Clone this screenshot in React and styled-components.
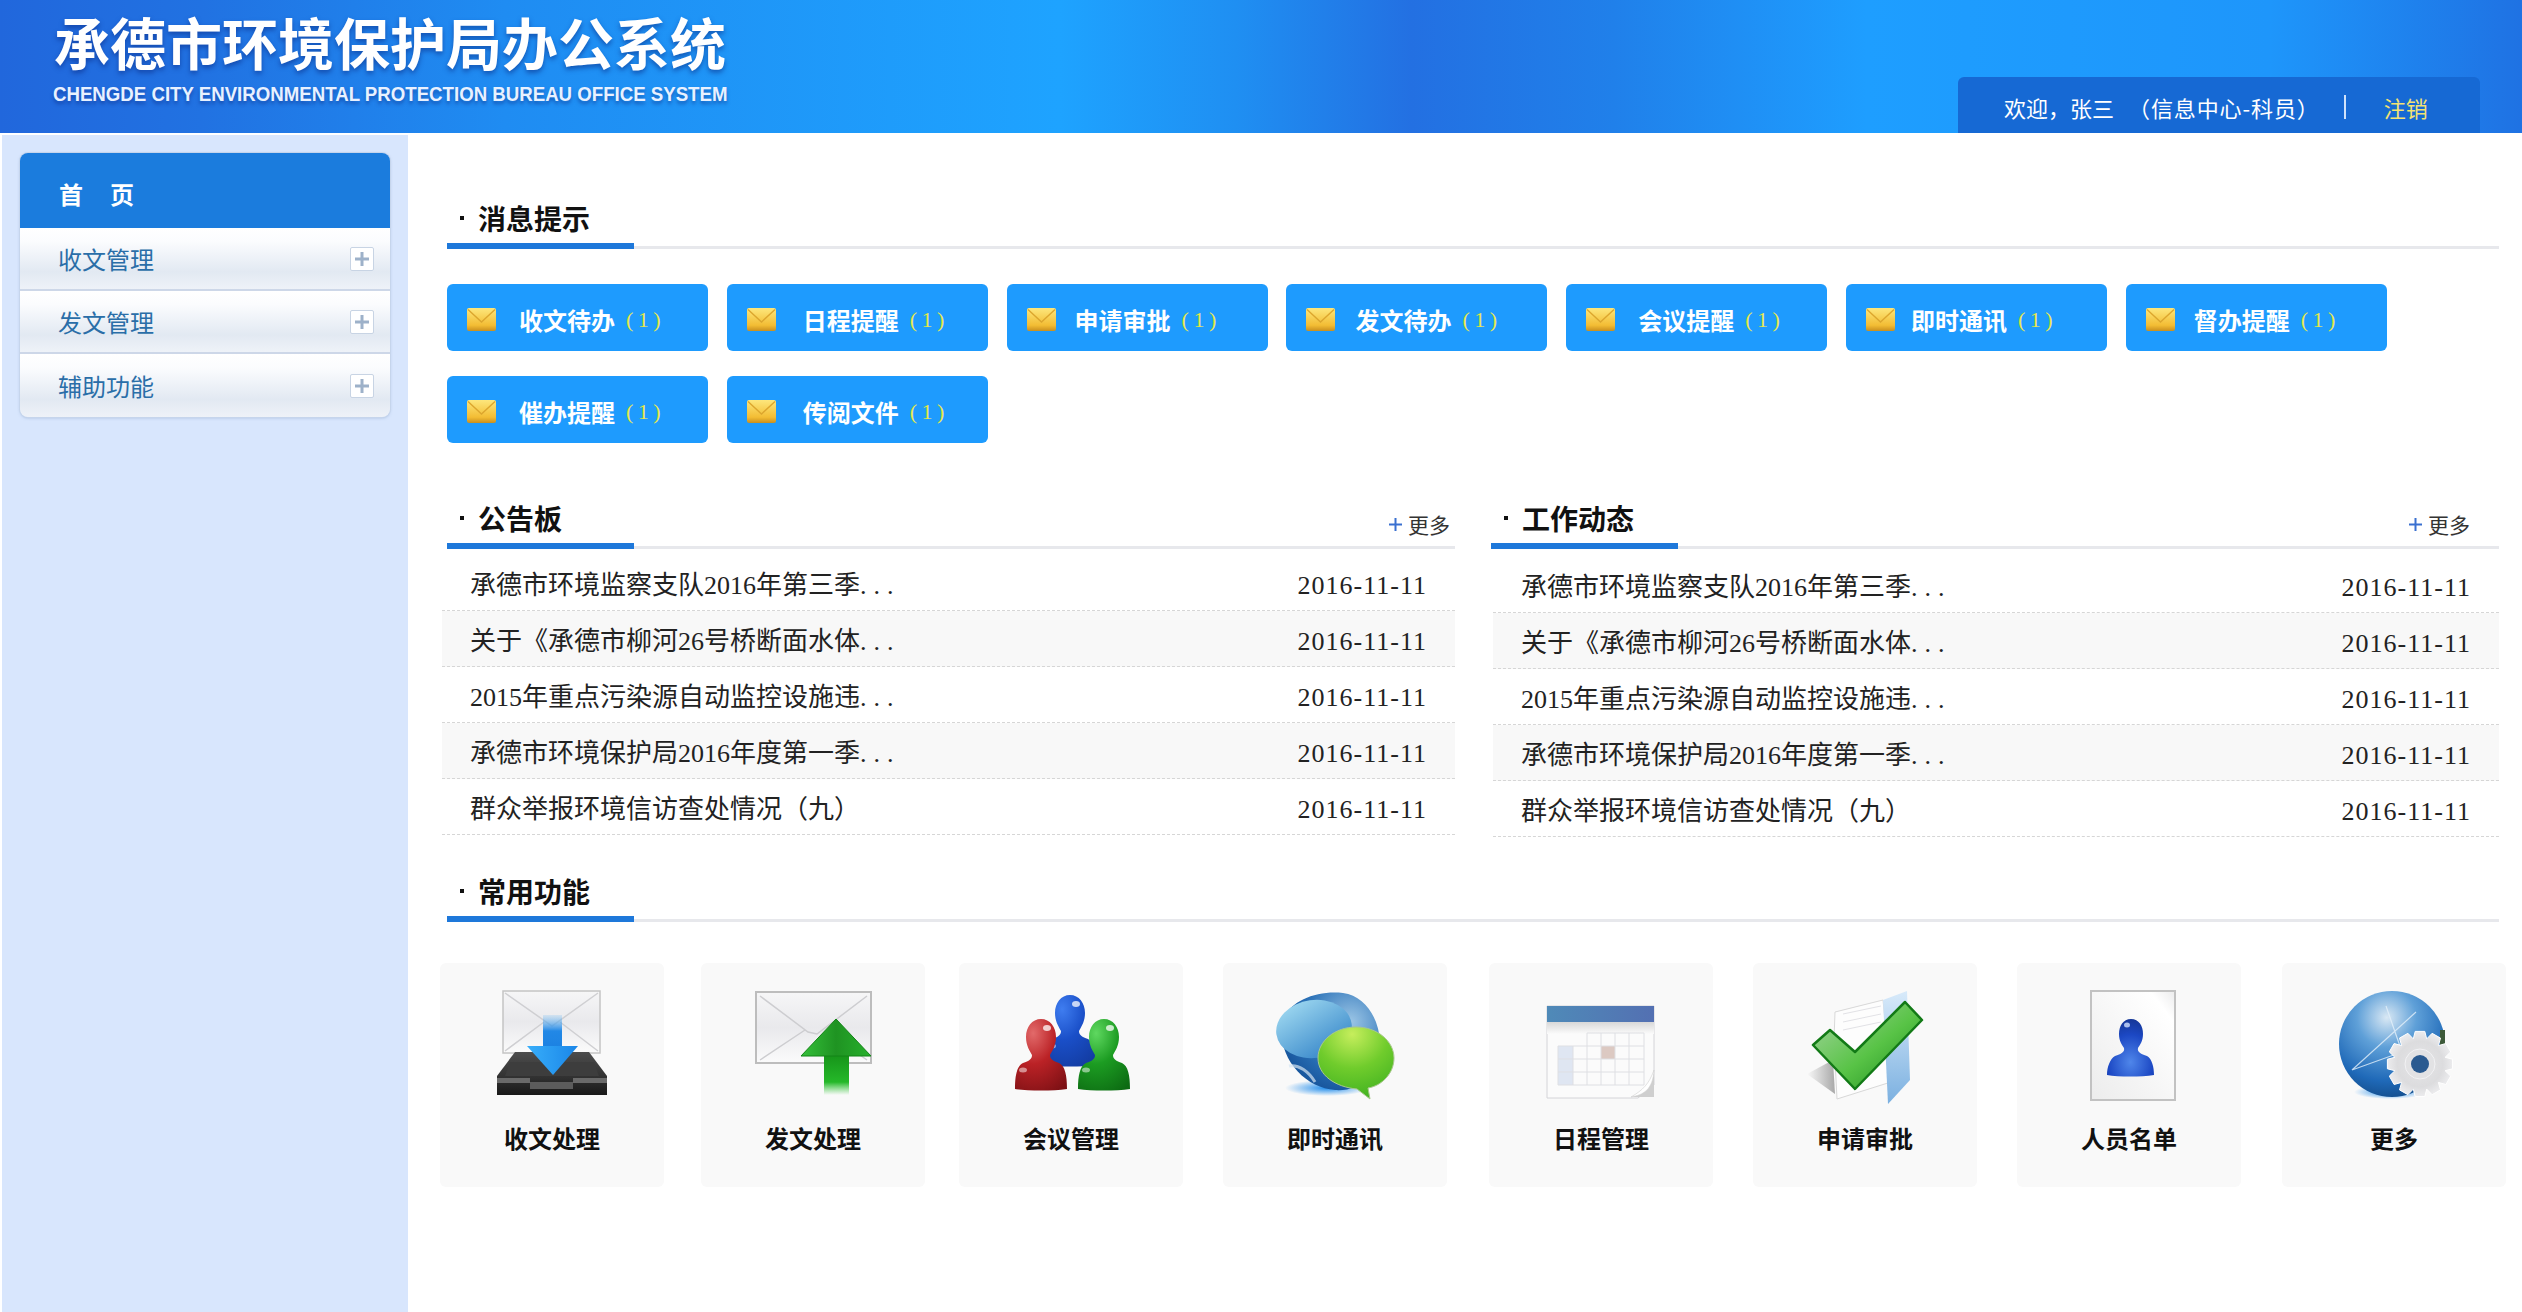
import React from 'react';
import styled, {createGlobalStyle} from 'styled-components';

const SANS = `"Liberation Sans", "Noto Sans CJK SC", sans-serif`;
const SERIF = `"Liberation Serif", "Noto Sans CJK SC", serif`;

const GlobalStyle = createGlobalStyle`
  html, body {
    margin: 0;
    padding: 0;
    background: #fff;
    font-family: ${SANS};
  }
`;

const Page = styled.div`
  width: 2522px;
  min-height: 1312px;
  display: flex;
  flex-direction: column;
  overflow: hidden;
`;

const Header = styled.header`
  height: 133px;
  flex: none;
  display: flex;
  justify-content: space-between;
  align-items: flex-end;
  padding: 0 42px 0 53px;
  box-sizing: border-box;
  background: linear-gradient(
    90deg,
    #2167dc 0%,
    #2172e2 8%,
    #1f8cf2 20%,
    #1ea3ff 42%,
    #1f8ff2 49%,
    #2370e2 56%,
    #2080ea 64%,
    #1e9eff 74%,
    #1e96fb 90%,
    #1f72e3 100%
  );
`;

const Brand = styled.div`
  align-self: flex-start;
  padding-top: 10px;
  color: #fff;
`;

const BrandTitle = styled.div`
  font: 700 56px/62px "Noto Sans CJK SC", sans-serif;
  white-space: nowrap;
  padding-left: 1px;
  text-shadow: 0 3px 5px rgba(10, 40, 130, 0.55);
`;

const BrandSub = styled.div`
  width: 674px;
  margin-top: 10px;
  font: 700 21px/24px ${SANS};
  white-space: nowrap;
  color: #e8f1ff;
  text-shadow: 0 3px 4px rgba(10, 40, 130, 0.5);
  transform: scaleX(0.888);
  transform-origin: left center;
`;

const UserBox = styled.div`
  width: 522px;
  height: 56px;
  box-sizing: border-box;
  padding: 4px 0 0 46px;
  display: flex;
  align-items: center;
  border-radius: 6px 6px 0 0;
  background: #1669d4;
  color: #fff;
  font: 400 22px/28px "Noto Sans CJK SC", sans-serif;
  white-space: nowrap;
`;

const UserDept = styled.span`
  margin-left: 14px;
  letter-spacing: 0.9px;
`;

const Divider = styled.span`
  width: 2px;
  height: 24px;
  margin: 0 38px 0 24px;
  background: #cfe2fb;
`;

const Logout = styled.span`
  color: #f3e272;
`;

const Body = styled.div`
  flex: 1;
  display: flex;
`;

const Sidebar = styled.aside`
  flex: 0 0 406px;
  margin: 2px 0 0 2px;
  padding: 18px 18px 0;
  box-sizing: border-box;
  background: #d8e6fd;
`;

const Menu = styled.nav`
  border-radius: 8px;
  overflow: hidden;
  box-shadow: 0 0 0 1px #c6d5ec, 0 1px 3px rgba(120, 150, 190, 0.5);
`;

const HomeItem = styled.div`
  height: 75px;
  box-sizing: border-box;
  padding: 6px 0 0 39px;
  display: flex;
  align-items: center;
  background: #1b7cdd;
  color: #fff;
  font: 700 24px/1 "Noto Sans CJK SC", sans-serif;
  letter-spacing: 27px;
`;

const MenuItem = styled.div`
  height: 63px;
  box-sizing: border-box;
  padding: 1px 16px 0 38px;
  display: flex;
  align-items: center;
  justify-content: space-between;
  background: linear-gradient(180deg, #fff 0%, #fbfcfe 22%, #e2e9f2 72%, #eef2f8 100%);
  border-bottom: 2px solid #cdd7e8;
  color: #2a6ea8;
  font: 400 24px/1 "Noto Sans CJK SC", sans-serif;
  &:last-child {
    border-bottom: 0;
  }
`;

const PlusBox = styled.span`
  width: 24px;
  height: 24px;
  box-sizing: border-box;
  display: flex;
  align-items: center;
  justify-content: center;
  background: #fff;
  border: 1px solid #c8d4e4;
  border-radius: 2px;
`;

const Main = styled.main`
  flex: 1;
  min-width: 0;
  padding: 56px 23px 0 39px;
`;

const SectionHead = styled.div`
  height: 60px;
  box-sizing: border-box;
  margin-top: ${({$top}) => $top || 0}px;
  display: flex;
  justify-content: space-between;
  border-bottom: 3px solid #e7e8ec;
`;

const SectionTitle = styled.h2`
  width: 187px;
  height: 60px;
  margin: 0;
  padding: 4px 0 0 13px;
  box-sizing: border-box;
  display: flex;
  align-items: center;
  gap: 14px;
  border-bottom: 6px solid #1e78da;
  color: #111;
  font: 700 28px/1 "Noto Sans CJK SC", sans-serif;
  white-space: nowrap;
`;

const TitleDot = styled.i`
  width: 4px;
  height: 4px;
  background: #111;
`;

const MoreLink = styled.a`
  align-self: flex-end;
  margin: 0 ${({$right}) => $right}px 6px 0;
  display: flex;
  align-items: center;
  gap: 6px;
  color: #333;
  font: 400 21px/32px "Noto Sans CJK SC", sans-serif;
  svg {
    display: block;
  }
`;

const NoticeGrid = styled.div`
  margin-top: 35px;
  display: flex;
  flex-wrap: wrap;
  gap: 25px 18.8px;
`;

const NoticeButton = styled.div`
  width: 261px;
  height: 67px;
  box-sizing: border-box;
  padding: 4px 0 0 20px;
  display: flex;
  align-items: center;
  border-radius: 6px;
  background: #1e9bfe;
  white-space: nowrap;
  svg {
    flex: none;
  }
`;

const NoticeLabel = styled.span`
  margin-left: ${({$indent}) => $indent}px;
  color: #fff;
  font: 700 24px/1 "Noto Sans CJK SC", sans-serif;
`;

const NoticeCount = styled.span`
  margin-left: 11px;
  color: #e6e84c;
  font: 400 22px/1 ${SERIF};
  letter-spacing: 4.5px;
`;

const Panels = styled.div`
  display: flex;
  gap: 36px;
`;

const Panel = styled.section`
  width: 1008px;
  flex: none;
`;

const NewsList = styled.ul`
  list-style: none;
  margin: ${({$top}) => $top}px 0 0 ${({$left}) => $left}px;
  padding: 0;
`;

const NewsRow = styled.li`
  height: 56px;
  box-sizing: border-box;
  padding: 7px 28px 0 28px;
  display: flex;
  align-items: center;
  justify-content: space-between;
  border-bottom: 1px dashed #d6d6d6;
  color: #222;
  font: 400 26px/1 ${SERIF};
  white-space: nowrap;
  &:nth-child(even) {
    background: #f8f8f8;
  }
`;

const Ellipsis = styled.span`
  letter-spacing: 7px;
`;

const NewsDate = styled.span`
  letter-spacing: 1px;
`;

const Shortcuts = styled.div`
  margin: 41px 0 0 -7px;
  display: flex;
`;

const ShortcutCard = styled.div`
  width: 224px;
  height: 224px;
  flex: none;
  margin-left: ${({$gap}) => $gap}px;
  display: flex;
  flex-direction: column;
  align-items: center;
  border-radius: 6px;
  background: #f9f9f9;
  svg {
    display: block;
    margin-top: 19px;
    overflow: visible;
  }
`;

const ShortcutLabel = styled.span`
  margin-top: 21px;
  color: #111;
  font: 700 24px/30px "Noto Sans CJK SC", sans-serif;
`;

function Plus() {
  return (
    <svg width="16" height="16" viewBox="0 0 16 16">
      <path d="M8 1v14M1 8h14" stroke="#9db1c9" strokeWidth="3" />
    </svg>
  );
}

function MailIcon() {
  return (
    <svg width="29" height="23" viewBox="0 0 29 23">
      <defs>
        <linearGradient id="mailGold" x1="0" y1="0" x2="0" y2="1">
          <stop offset="0" stopColor="#fde77c" />
          <stop offset="0.75" stopColor="#f3bd34" />
          <stop offset="1" stopColor="#c98f1e" />
        </linearGradient>
      </defs>
      <rect width="29" height="23" rx="2" fill="url(#mailGold)" />
      <path d="M1 1.5 14.5 14 28 1.5" fill="none" stroke="#dca62e" strokeWidth="1.4" />
    </svg>
  );
}

function InboxIcon() {
  return (
    <svg width="140" height="120" viewBox="0 0 140 120">
      <defs>
        <linearGradient id="envGrey" x1="0" y1="0" x2="0" y2="1">
          <stop offset="0" stopColor="#f6f6f7" />
          <stop offset="0.5" stopColor="#e9e9ec" />
          <stop offset="1" stopColor="#fbfbfb" />
        </linearGradient>
        <linearGradient id="trayDark" x1="0" y1="0" x2="0" y2="1">
          <stop offset="0" stopColor="#4d4d4d" />
          <stop offset="0.55" stopColor="#333" />
          <stop offset="1" stopColor="#191919" />
        </linearGradient>
        <linearGradient id="downShaft" x1="0" y1="0" x2="0" y2="1">
          <stop offset="0" stopColor="#6cb9f2" stopOpacity="0.2" />
          <stop offset="0.5" stopColor="#2288e6" />
          <stop offset="1" stopColor="#1c82e2" />
        </linearGradient>
        <linearGradient id="downHead" x1="0" y1="0" x2="1" y2="0">
          <stop offset="0" stopColor="#38aefa" />
          <stop offset="1" stopColor="#1a86e8" />
        </linearGradient>
      </defs>
      <rect x="21" y="9" width="97" height="62" fill="url(#envGrey)" stroke="#c4c4c4" strokeWidth="1.5" />
      <path d="M23 11 70 44 116 11M23 69 62 40M116 69 78 40" fill="none" stroke="#cfcfd2" strokeWidth="1.5" />
      <path d="M33 70h74l18 24v19H15V94z" fill="url(#trayDark)" />
      <path d="M28 80h84l5 14H23z" fill="#3d3d3d" />
      <path d="M15 96h33v5H15zM91 96h34v5H91z" fill="#6a6a6a" />
      <path d="M48 100h43v7H48z" fill="#5c5c5c" />
      <rect x="61" y="33" width="19" height="32" fill="url(#downShaft)" />
      <path d="M45 64h51L71 93z" fill="url(#downHead)" />
    </svg>
  );
}

function OutboxIcon() {
  return (
    <svg width="140" height="120" viewBox="0 0 140 120">
      <defs>
        <linearGradient id="upHead" x1="0" y1="0" x2="1" y2="0">
          <stop offset="0" stopColor="#35c03a" />
          <stop offset="0.5" stopColor="#1f9322" />
          <stop offset="1" stopColor="#27b02c" />
        </linearGradient>
        <linearGradient id="upShaft" x1="0" y1="0" x2="0" y2="1">
          <stop offset="0" stopColor="#159018" />
          <stop offset="0.7" stopColor="#25b829" />
          <stop offset="1" stopColor="#3ccc40" stopOpacity="0" />
        </linearGradient>
      </defs>
      <rect x="13" y="10" width="115" height="71" fill="url(#envGrey)" stroke="#bdbdbd" strokeWidth="2" />
      <path d="M17 14 65 50 74 52 124 14M17 78 62 48M124 78 84 50" fill="none" stroke="#cdcdd0" strokeWidth="1.5" />
      <rect x="81" y="70" width="25" height="43" fill="url(#upShaft)" />
      <path d="M93 37 128 74H58z" fill="url(#upHead)" stroke="#128416" strokeWidth="1" strokeLinejoin="round" />
    </svg>
  );
}

function Bust({id, cx, top, light, mid, dark}) {
  return (
    <g transform={`translate(${cx} ${top})`}>
      <defs>
        <radialGradient id={id} cx="0.35" cy="0.2" r="0.95">
          <stop offset="0" stopColor={light} />
          <stop offset="0.45" stopColor={mid} />
          <stop offset="1" stopColor={dark} />
        </radialGradient>
      </defs>
      <path
        d="M0 0C9 0 15 8 15 18 15 27 11 32 9 36 9 40 12 42 18 44 24 47 26 56 26 70 12 72-12 72-26 70-26 56-24 47-18 44-12 42-9 40-9 36-11 32-15 27-15 18-15 8-9 0 0 0z"
        fill={`url(#${id})`}
      />
      <ellipse cx="6" cy="9" rx="4" ry="3" fill="#fff" opacity="0.75" />
      <ellipse cx="-18" cy="51" rx="4" ry="2.5" fill="#fff" opacity="0.5" />
    </g>
  );
}

function MeetingIcon() {
  return (
    <svg width="140" height="120" viewBox="0 0 140 120">
      <Bust id="bustBlue" cx={69} top={13} light="#3f7df0" mid="#1a4fc8" dark="#123a9e" />
      <Bust id="bustRed" cx={40} top={37} light="#e26a6a" mid="#bb2226" dark="#7c1014" />
      <Bust id="bustGreen" cx={103} top={37} light="#5fd860" mid="#1c9c22" dark="#0c6a12" />
    </svg>
  );
}

function ChatIcon() {
  return (
    <svg width="140" height="120" viewBox="0 0 140 120">
      <defs>
        <radialGradient id="chatBack" cx="0.7" cy="0.3" r="0.8">
          <stop offset="0" stopColor="#9cc6e6" />
          <stop offset="0.6" stopColor="#2b72b8" />
          <stop offset="1" stopColor="#134f96" />
        </radialGradient>
        <linearGradient id="chatFront" x1="0" y1="0" x2="0.6" y2="1">
          <stop offset="0" stopColor="#a8e0f4" />
          <stop offset="1" stopColor="#3b8acb" />
        </linearGradient>
        <radialGradient id="chatGreen" cx="0.45" cy="0.1" r="0.95">
          <stop offset="0" stopColor="#c6ee5c" />
          <stop offset="0.5" stopColor="#70cc2c" />
          <stop offset="1" stopColor="#3eb020" />
        </radialGradient>
        <radialGradient id="chatGlow">
          <stop offset="0" stopColor="#1f8cec" />
          <stop offset="1" stopColor="#1f8cec" stopOpacity="0" />
        </radialGradient>
      </defs>
      <ellipse cx="62" cy="106" rx="42" ry="8" fill="url(#chatGlow)" />
      <path d="M16 42C22 20 50 8 78 11 100 14 114 36 115 60 116 90 96 110 70 108 42 106 14 80 16 42z" fill="url(#chatBack)" />
      <ellipse cx="49" cy="47" rx="38" ry="29" transform="rotate(-8 49 47)" fill="url(#chatFront)" />
      <path d="M24 84C34 82 44 90 50 100" fill="none" stroke="#d6e6f2" strokeWidth="3" opacity="0.7" />
      <path d="M91 45C112 45 129 59 129 76 129 92 116 104 103 106L105 117 92 107C70 105 53 93 53 76 53 59 70 45 91 45z" fill="url(#chatGreen)" stroke="#a8c88c" strokeWidth="1" />
    </svg>
  );
}

function CalendarIcon() {
  const cols = [27, 42, 56, 70, 84, 98, 113];
  const rows = [51, 64, 77, 90, 103];
  return (
    <svg width="140" height="120" viewBox="0 0 140 120">
      <defs>
        <linearGradient id="calBar" x1="0" y1="0" x2="1" y2="0">
          <stop offset="0" stopColor="#4f8ab8" />
          <stop offset="1" stopColor="#5370b2" />
        </linearGradient>
        <linearGradient id="calShade" x1="0" y1="0" x2="0" y2="1">
          <stop offset="0" stopColor="#d8d8d8" />
          <stop offset="1" stopColor="#fbfbfb" />
        </linearGradient>
      </defs>
      <path d="M16 24h107v79l-16 13H16z" fill="#fbfbfb" stroke="#d4d4d8" strokeWidth="1" />
      <rect x="16" y="40" width="107" height="12" fill="url(#calShade)" />
      <rect x="16" y="24" width="107" height="16" fill="url(#calBar)" />
      <rect x="27" y="64" width="15" height="39" fill="#dfe6f2" />
      <rect x="70" y="64" width="14" height="13" fill="#dcc9c2" />
      <path
        d={
          cols.map((x, i) => `M${x} ${i < 2 ? 64 : 51}V103`).join('') +
          rows.map((y, i) => `M${i === 0 ? 56 : 27} ${y}H113`).join('')
        }
        fill="none"
        stroke="#dedfe3"
        strokeWidth="1"
      />
      <path d="M123 88C120 102 114 110 100 115L123 115z" fill="#cfcfcf" />
      <path d="M123 88C118 102 112 108 100 115 112 113 122 108 123 88z" fill="#fff" stroke="#d0d0d0" strokeWidth="0.6" />
    </svg>
  );
}

function ApproveIcon() {
  return (
    <svg width="140" height="120" viewBox="0 0 140 120">
      <defs>
        <linearGradient id="chkFill" x1="0" y1="0" x2="1" y2="1">
          <stop offset="0" stopColor="#a9d6a4" />
          <stop offset="0.55" stopColor="#58c346" />
          <stop offset="1" stopColor="#1a8a1c" />
        </linearGradient>
        <linearGradient id="folderBlue" x1="0" y1="0" x2="0" y2="1">
          <stop offset="0" stopColor="#d8eafa" />
          <stop offset="1" stopColor="#7bb0e0" />
        </linearGradient>
        <linearGradient id="chkShadow" x1="1" y1="0" x2="0" y2="0">
          <stop offset="0" stopColor="#a8a8a8" />
          <stop offset="1" stopColor="#a8a8a8" stopOpacity="0" />
        </linearGradient>
      </defs>
      <path d="M12 92 38 78 40 112z" fill="url(#chkShadow)" />
      <path d="M40 30 88 18 96 100 42 117 39 58z" fill="#fdfdfd" stroke="#d8d8d8" strokeWidth="1" />
      <path d="M48 32 86 24M48 40 86 32M48 48 86 40" stroke="#e2e2e6" strokeWidth="1" />
      <path d="M88 18 112 9 115 98 93 122z" fill="url(#folderBlue)" />
      <path d="M18 63 35 48 60 70 110 20 127 38 60 107z" fill="url(#chkFill)" stroke="#127a16" strokeWidth="2.5" strokeLinejoin="round" />
    </svg>
  );
}

function PeopleIcon() {
  return (
    <svg width="140" height="120" viewBox="0 0 140 120">
      <defs>
        <linearGradient id="pageGrey" x1="1" y1="0" x2="0" y2="1">
          <stop offset="0" stopColor="#ebebec" />
          <stop offset="0.15" stopColor="#fff" />
          <stop offset="1" stopColor="#ececec" />
        </linearGradient>
        <radialGradient id="personBlue" cx="0.5" cy="0.75" r="0.8">
          <stop offset="0" stopColor="#4f86ea" />
          <stop offset="0.6" stopColor="#1c48c4" />
          <stop offset="1" stopColor="#14348f" />
        </radialGradient>
      </defs>
      <rect x="32" y="9" width="84" height="109" fill="url(#pageGrey)" stroke="#c2c2c2" strokeWidth="2" />
      <path
        d="M72 37C80 37 84 44 84 52 84 59 81 63 79 66 78 70 82 72 88 74 93 77 95 85 95 93 82 95 60 95 48 93 48 85 51 77 56 74 62 72 66 70 65 66 63 63 60 59 60 52 60 44 64 37 72 37z"
        fill="url(#personBlue)"
      />
      <ellipse cx="68" cy="43" rx="3" ry="2.5" fill="#cfe0ff" opacity="0.8" />
    </svg>
  );
}

function gearPath(cx, cy, outer, inner, teeth) {
  const points = [];
  const step = (Math.PI * 2) / teeth;
  for (let i = 0; i < teeth; i++) {
    const a = i * step;
    [
      [inner, -0.5],
      [outer, -0.28],
      [outer, 0.28],
      [inner, 0.5],
    ].forEach(([r, k]) => {
      const t = a + k * step;
      points.push(`${(cx + r * Math.cos(t)).toFixed(1)} ${(cy + r * Math.sin(t)).toFixed(1)}`);
    });
  }
  return `M${points.join('L')}z`;
}

function MoreIcon() {
  return (
    <svg width="140" height="120" viewBox="0 0 140 120">
      <defs>
        <radialGradient id="globeBlue" cx="0.45" cy="0.25" r="0.8">
          <stop offset="0" stopColor="#d9e8f4" />
          <stop offset="0.35" stopColor="#5fa0d8" />
          <stop offset="0.75" stopColor="#1f69b8" />
          <stop offset="1" stopColor="#134a86" />
        </radialGradient>
        <radialGradient id="globeGlow">
          <stop offset="0" stopColor="#1f8cec" />
          <stop offset="1" stopColor="#1f8cec" stopOpacity="0" />
        </radialGradient>
        <radialGradient id="gearGrey">
          <stop offset="0" stopColor="#e6e6e8" />
          <stop offset="0.7" stopColor="#dcdcde" />
          <stop offset="1" stopColor="#ececee" />
        </radialGradient>
      </defs>
      <ellipse cx="66" cy="110" rx="36" ry="7" fill="url(#globeGlow)" />
      <circle cx="68" cy="62" r="53" fill="url(#globeBlue)" />
      <path d="M28 88 92 30M28 88 78 70 62 24M78 70 112 84" fill="none" stroke="#e4f0fa" strokeWidth="1.2" opacity="0.8" />
      <path d="M116 48h5v20h-5z" fill="#3d5a3a" />
      <path d={gearPath(96, 82, 33, 26, 12)} fill="url(#gearGrey)" stroke="#fff" strokeWidth="1" />
      <circle cx="96" cy="82" r="15" fill="#e2e2e4" stroke="#f2f2f4" strokeWidth="1" />
      <circle cx="96" cy="82" r="9" fill="#2a5a90" />
    </svg>
  );
}

const NOTICES = [
  {label: '收文待办', indent: 23},
  {label: '日程提醒', indent: 27},
  {label: '申请审批', indent: 19},
  {label: '发文待办', indent: 20},
  {label: '会议提醒', indent: 23},
  {label: '即时通讯', indent: 16},
  {label: '督办提醒', indent: 19},
  {label: '催办提醒', indent: 23},
  {label: '传阅文件', indent: 27},
];

const NEWS = [
  '承德市环境监察支队2016年第三季...',
  '关于《承德市柳河26号桥断面水体...',
  '2015年重点污染源自动监控设施违...',
  '承德市环境保护局2016年度第一季...',
  '群众举报环境信访查处情况（九）',
];

const SHORTCUTS = [
  {label: '收文处理', gap: 0, Icon: InboxIcon},
  {label: '发文处理', gap: 37, Icon: OutboxIcon},
  {label: '会议管理', gap: 34, Icon: MeetingIcon},
  {label: '即时通讯', gap: 40, Icon: ChatIcon},
  {label: '日程管理', gap: 42, Icon: CalendarIcon},
  {label: '申请审批', gap: 40, Icon: ApproveIcon},
  {label: '人员名单', gap: 40, Icon: PeopleIcon},
  {label: '更多', gap: 41, Icon: MoreIcon},
];

function Section({title, top, more}) {
  return (
    <SectionHead $top={top}>
      <SectionTitle>
        <TitleDot />
        {title}
      </SectionTitle>
      {more !== undefined && (
        <MoreLink $right={more}>
          <svg width="13" height="13" viewBox="0 0 13 13">
            <path d="M6.5 0v13M0 6.5h13" stroke="#3a70d0" strokeWidth="2" />
          </svg>
          更多
        </MoreLink>
      )}
    </SectionHead>
  );
}

function News({top, left}) {
  return (
    <NewsList $top={top} $left={left}>
      {NEWS.map((item) => (
        <NewsRow key={item}>
          <span>
            {item.replace('...', '')}
            {item.endsWith('...') && <Ellipsis>...</Ellipsis>}
          </span>
          <NewsDate>2016-11-11</NewsDate>
        </NewsRow>
      ))}
    </NewsList>
  );
}

export default function App() {
  return (
    <Page>
      <GlobalStyle />
      <Header>
        <Brand>
          <BrandTitle>承德市环境保护局办公系统</BrandTitle>
          <BrandSub>CHENGDE CITY ENVIRONMENTAL PROTECTION BUREAU OFFICE SYSTEM</BrandSub>
        </Brand>
        <UserBox>
          欢迎，张三
          <UserDept>（信息中心-科员）</UserDept>
          <Divider />
          <Logout>注销</Logout>
        </UserBox>
      </Header>
      <Body>
        <Sidebar>
          <Menu>
            <HomeItem>首页</HomeItem>
            {['收文管理', '发文管理', '辅助功能'].map((name) => (
              <MenuItem key={name}>
                {name}
                <PlusBox>
                  <Plus />
                </PlusBox>
              </MenuItem>
            ))}
          </Menu>
        </Sidebar>
        <Main>
          <Section title="消息提示" />
          <NoticeGrid>
            {NOTICES.map(({label, indent}) => (
              <NoticeButton key={label}>
                <MailIcon />
                <NoticeLabel $indent={indent}>{label}</NoticeLabel>
                <NoticeCount>(1)</NoticeCount>
              </NoticeButton>
            ))}
          </NoticeGrid>
          <Panels>
            <Panel>
              <Section title="公告板" top={46} more={5} />
              <News top={6} left={-5} />
            </Panel>
            <Panel>
              <Section title="工作动态" top={46} more={29} />
              <News top={8} left={2} />
            </Panel>
          </Panels>
          <Section title="常用功能" top={25} />
          <Shortcuts>
            {SHORTCUTS.map(({label, gap, Icon}) => (
              <ShortcutCard key={label} $gap={gap}>
                <Icon />
                <ShortcutLabel>{label}</ShortcutLabel>
              </ShortcutCard>
            ))}
          </Shortcuts>
        </Main>
      </Body>
    </Page>
  );
}
